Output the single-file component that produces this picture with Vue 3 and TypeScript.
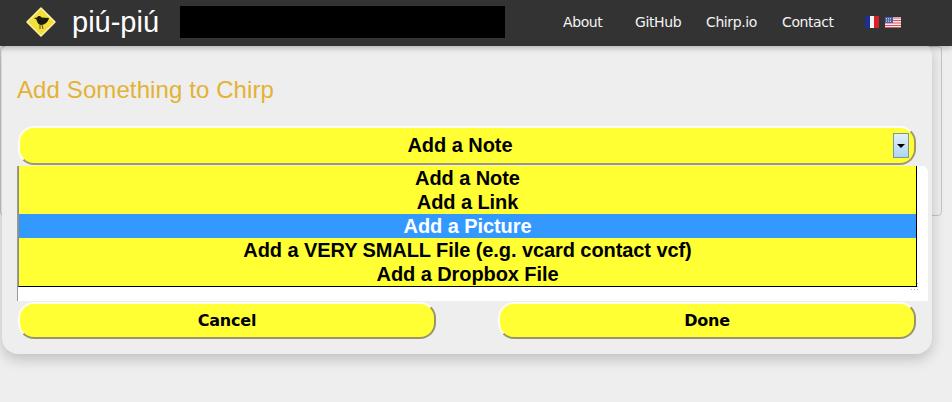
<script setup lang="ts">
const navLinks = ['About', 'GitHub', 'Chirp.io', 'Contact']
const options = [
  'Add a Note',
  'Add a Link',
  'Add a Picture',
  'Add a VERY SMALL File (e.g. vcard contact vcf)',
  'Add a Dropbox File'
]
const selectedOption = 2
</script>

<template>
  <div class="page">
    <header class="topbar">
      <svg class="logo" width="32" height="32" viewBox="0 0 32 32">
        <path d="M16 2 L30 16 L16 30 L2 16 Z" fill="#f2df3c" stroke="#fff3a0" stroke-width="1.5" stroke-linejoin="round" />
        <path d="M9 12 L12 11.500 C13 9.500 15.500 9.500 16.500 11.500 L24 12 C23 16 20 19 16 19 C13.500 19 12 16 11.500 13.500 Z" fill="#1c1a0c" />
        <path d="M15 19 L15 23 M17 19 L18 23" stroke="#5b5220" stroke-width="1" />
      </svg>
      <span class="brand">piú-piú</span>
      <div class="redacted"></div>
      <nav class="nav">
        <a v-for="link in navLinks" :key="link" class="nav-link">{{ link }}</a>
      </nav>
      <div class="flags">
        <svg width="14" height="12" viewBox="0 0 14 12">
          <rect width="5" height="12" fill="#1d2f8f" />
          <rect x="5" width="4" height="12" fill="#f4f4f4" />
          <rect x="9" width="5" height="12" fill="#d8202c" />
        </svg>
        <svg width="16" height="11" viewBox="0 0 16 11">
          <rect width="16" height="11" fill="#f4ecec" />
          <path d="M0 1h16M0 3.500h16M0 6h16M0 8.500h16M0 10.500h16" stroke="#d4525a" stroke-width="1.200" />
          <rect width="8" height="6" fill="#4d5fa8" />
          <path d="M1 1.500h6M1 3h6M1 4.500h6" stroke="#d9def0" stroke-width="0.800" stroke-dasharray="1 1" />
        </svg>
      </div>
    </header>

    <div class="backdrop-panel"></div>

    <section class="dialog">
      <h2 class="dialog-title">Add Something to Chirp</h2>
      <div class="select">
        <span class="select-label">Add a Note</span>
        <span class="select-arrow"><i></i></span>
      </div>
      <div class="field">
        <svg class="grip" width="9" height="9" viewBox="0 0 9 9">
          <path d="M7 1h1v1H7zM4 4h1v1H4zM7 4h1v1H7zM1 7h1v1H1zM4 7h1v1H4zM7 7h1v1H7z" fill="#b5b5b5" />
        </svg>
        <ul class="options">
          <li
            v-for="(option, i) in options"
            :key="option"
            class="option"
            :class="{ selected: i === selectedOption }"
          >{{ option }}</li>
        </ul>
      </div>
      <div class="actions">
        <button class="action">Cancel</button>
        <button class="action">Done</button>
      </div>
    </section>
  </div>
</template>

<style>
html,
body {
  margin: 0;
  background: #eeeeee;
}
</style>

<style scoped>
.page {
  position: relative;
  width: 952px;
  height: 402px;
  overflow: hidden;
  background: #eeeeee;
}

.topbar {
  position: relative;
  z-index: 3;
  display: flex;
  align-items: center;
  height: 46px;
  padding: 0 0 2px 25px;
  box-sizing: border-box;
  background: #333333;
  box-shadow: 0 2px 6px rgba(0, 0, 0, 0.25);
}

.logo {
  flex: none;
}

.brand {
  margin-left: 15px;
  font: 29px "Liberation Sans", Arial, sans-serif;
  color: #ffffff;
  width: 108px;
}

.redacted {
  width: 325px;
  height: 32px;
  background: #000000;
}

.nav {
  display: flex;
  margin-left: 58px;
}

.nav-link {
  font: 14px "DejaVu Sans", sans-serif;
  letter-spacing: -0.4px;
  color: #f4f4f4;
}

.nav-link:nth-child(1) { width: 72px; }
.nav-link:nth-child(2) { width: 71px; }
.nav-link:nth-child(3) { width: 76px; }
.nav-link:nth-child(4) { width: 83px; }

.flags {
  display: flex;
  align-items: center;
  gap: 6px;
}

.backdrop-panel {
  position: absolute;
  top: 46px;
  left: 0;
  width: 942px;
  height: 170px;
  box-sizing: border-box;
  background: #eeeeee;
  border: 1px solid #c4c4c4;
  border-radius: 4px;
}

.dialog {
  position: absolute;
  z-index: 2;
  top: 40px;
  left: 2px;
  width: 930px;
  height: 314px;
  box-sizing: border-box;
  padding: 34px 15px 0 16px;
  background: #eeeeee;
  border-radius: 16px;
  box-shadow: 0 5px 14px rgba(0, 0, 0, 0.2);
}

.dialog-title {
  margin: 0 0 0 -1px;
  font: 400 24px/32px "Liberation Sans", Arial, sans-serif;
  letter-spacing: 0.1px;
  color: #e3b235;
}

.select {
  position: relative;
  display: flex;
  align-items: center;
  justify-content: center;
  height: 39px;
  margin-top: 20px;
  width: 898px;
  box-sizing: border-box;
  background: #ffff33;
  border: 2px solid #fdfdf4;
  border-right-color: #a09a68;
  border-bottom-color: #a09a68;
  border-radius: 16px;
  font: 700 20px "Liberation Sans", Arial, sans-serif;
  letter-spacing: -0.05px;
  color: #000000;
}

.select-label {
  margin-right: 14px;
}

.select-arrow {
  position: absolute;
  right: 5px;
  top: 5px;
  display: flex;
  align-items: center;
  justify-content: center;
  width: 16px;
  height: 25px;
  box-sizing: border-box;
  border: 1px solid #7c94a8;
  background: linear-gradient(#e2effa, #aed6f5);
}

.select-arrow i {
  width: 0;
  height: 0;
  border-left: 4px solid transparent;
  border-right: 4px solid transparent;
  border-top: 4px solid #000000;
}

.field {
  position: relative;
  width: 911px;
  height: 135px;
  margin: 1px 0 0 -1px;
  box-sizing: border-box;
  background: #ffffff;
  border-left: 1px solid #9a9a9a;
  border-radius: 0 6px 0 0;
}

.options {
  position: absolute;
  top: 0;
  left: 0;
  width: 899px;
  margin: 0;
  padding: 0;
  list-style: none;
  box-sizing: border-box;
  border-left: 1px solid #8f8f80;
  border-right: 1px solid #000000;
  border-bottom: 1px solid #000000;
}

.option {
  height: 24px;
  background: #ffff33;
  font: 700 20px/24px "Liberation Sans", Arial, sans-serif;
  letter-spacing: -0.08px;
  text-align: center;
  color: #000000;
}

.option.selected {
  background: #3399ff;
  color: #ffffff;
}

.grip {
  position: absolute;
  right: 9px;
  bottom: 10px;
}

.actions {
  display: flex;
  justify-content: space-between;
  width: 898px;
  margin-top: 1px;
}

.action {
  width: 418px;
  height: 37px;
  padding: 0;
  box-sizing: border-box;
  background: #ffff33;
  border: 2px solid #fdfdf0;
  border-right-color: #9a9568;
  border-bottom-color: #9a9568;
  border-radius: 16px;
  font: 700 16px "DejaVu Sans", sans-serif;
  letter-spacing: -0.2px;
  color: #000000;
}
</style>
